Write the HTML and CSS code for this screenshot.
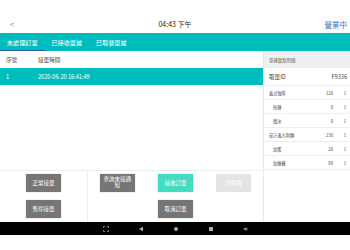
FILE: index.html
```html
<!DOCTYPE html>
<html lang="zh-Hant">
<head>
<meta charset="utf-8">
<link rel="stylesheet" href="styles.css">
</head>
<body>
<div class="screen">
  <div class="statusbar"></div>
  <header class="topbar">
    <span class="back">&lt;</span>
    <span class="clock">04:43 下午</span>
    <span class="status">營業中</span>
  </header>
  <nav class="tabs">
    <div class="tab active">未處理訂單</div>
    <div class="tab">已接收單據</div>
    <div class="tab">已取餐單據</div>
  </nav>
  <main class="main">
    <section class="left">
      <div class="table">
        <div class="trow thead"><span class="c1">序號</span><span class="c2">接單時間</span></div>
        <div class="trow selected"><span class="c1">1</span><span class="c2">2020-06-20 16:41:49</span></div>
      </div>
      <div class="actions">
        <div class="group-left">
          <button class="btn grey">正常接單</button>
          <button class="btn grey">暫停接單</button>
        </div>
        <div class="group-mid">
          <button class="btn grey two">查詢未接通知</button>
          <button class="btn mint">接收訂單</button>
          <button class="btn light">已取餐</button>
          <span></span>
          <button class="btn grey">取消訂單</button>
          <span></span>
        </div>
      </div>
    </section>
    <aside class="detail">
      <div class="d-head">單據餐點明細</div>
      <div class="d-id"><span>取單ID</span><span>F9336</span></div>
      <div class="item"><span class="name">義式咖啡</span><span class="price">120</span><span class="qty">1</span></div>
      <div class="item sub"><span class="name">無糖</span><span class="price">0</span><span class="qty">1</span></div>
      <div class="item sub"><span class="name">微冰</span><span class="price">0</span><span class="qty">1</span></div>
      <div class="item"><span class="name">茄汁義大利麵</span><span class="price">230</span><span class="qty">1</span></div>
      <div class="item sub"><span class="name">加蛋</span><span class="price">20</span><span class="qty">1</span></div>
      <div class="item sub"><span class="name">加爆雞</span><span class="price">80</span><span class="qty">1</span></div>
    </aside>
  </main>
  <footer class="navbar">
    <svg class="nav-ico" viewBox="0 0 6 6"><path d="M0.5 2V0.5H2M4 0.5H5.5V2M5.5 4V5.5H4M2 5.5H0.5V4" fill="none" stroke="#9a9a9a" stroke-width="0.8"/></svg>
    <svg class="nav-ico" viewBox="0 0 6 6"><path d="M1 3L5 0.8V5.2Z" fill="#b0b0b0"/></svg>
    <svg class="nav-ico" viewBox="0 0 6 6"><circle cx="3" cy="3" r="1.9" fill="#b0b0b0"/></svg>
    <svg class="nav-ico" viewBox="0 0 6 6"><rect x="1" y="1" width="4" height="4" fill="#b0b0b0"/></svg>
    <svg class="nav-ico" viewBox="0 0 6 6"><path d="M0.8 2.2H2L3.6 1V5L2 3.8H0.8Z" fill="#9a9a9a"/><path d="M4.3 2.2Q4.9 3 4.3 3.8" fill="none" stroke="#9a9a9a" stroke-width="0.5"/></svg>
  </footer>
</div>
</body>
</html>
```
FILE: styles.css
```css
html, body {
  margin: 0;
  padding: 0;
  background: #ffffff;
}
body {
  font-family: "Noto Sans CJK TC", "Noto Sans", sans-serif;
  color: #333;
}
.screen {
  width: 350px;
  height: 250px;
  overflow: hidden;
  display: flex;
  flex-direction: column;
}
.statusbar {
  height: 16px;
  flex: none;
}
.topbar {
  height: 17px;
  flex: none;
  display: grid;
  grid-template-columns: 1fr auto 1fr;
  align-items: center;
}
.back {
  padding-left: 10px;
  font-size: 7px;
  color: #888;
  line-height: 1;
}
.clock {
  font-size: 7px;
  color: #222;
  line-height: 1;
}
.status {
  justify-self: end;
  height: 15px;
  display: flex;
  align-items: center;
  padding: 0 3px 0 2px;
  font-size: 7.5px;
  color: #3b74b8;
  background: #fbfcfe;
  box-shadow: 0 0 1px rgba(0,0,0,0.15);
}
.tabs {
  height: 18px;
  flex: none;
  background: #00bdbd;
  display: flex;
}
.tab {
  width: 44.5px;
  display: flex;
  align-items: center;
  justify-content: center;
  font-size: 6.2px;
  color: #ffffff;
  box-sizing: border-box;
}
.tab.active {
  border-bottom: 1px solid #2c5ea8;
  padding-top: 1px;
}
.main {
  height: 171px;
  flex: none;
  display: flex;
}
.left {
  width: 263px;
  display: flex;
  flex-direction: column;
}
.table {
  height: 119px;
}
.trow {
  height: 17px;
  display: flex;
  align-items: center;
  font-size: 5.6px;
}
.thead {
  color: #444;
}
.selected {
  background: #00bdbd;
  color: #ffffff;
}
.c1 {
  width: 38px;
  padding-left: 6px;
  box-sizing: border-box;
}
.actions {
  flex: 1;
  display: flex;
  border-top: 1px solid #eeeeee;
}
.group-left {
  width: 88px;
  border-right: 1px solid #eeeeee;
  display: flex;
  flex-direction: column;
  align-items: center;
  gap: 8px;
  padding-top: 3px;
  box-sizing: border-box;
}
.group-mid {
  flex: 1;
  display: grid;
  grid-template-columns: repeat(3, 1fr);
  grid-template-rows: 18px 18px;
  row-gap: 8px;
  justify-items: center;
  padding-top: 3px;
}
.btn {
  width: 35px;
  height: 18px;
  border: none;
  margin: 0;
  padding: 0 3px;
  font-family: inherit;
  font-size: 5.5px;
  line-height: 1.1;
  color: #ffffff;
  box-shadow: 0 0 1px rgba(0,0,0,0.3);
}
.btn.two {
  padding-top: 0;
  line-height: 1.05;
  display: block;
  text-align: center;
}
.grey {
  background: #767676;
}
.mint {
  background: #44dbc0;
}
.light {
  background: #e4e4e4;
  box-shadow: none;
}
.detail {
  flex: 1;
  border-left: 1px solid #e8e8e8;
  display: flex;
  flex-direction: column;
}
.d-head {
  height: 17px;
  background: #efefef;
  display: flex;
  align-items: center;
  padding-left: 5px;
  font-size: 4.4px;
  color: #666;
}
.d-id {
  height: 18px;
  display: flex;
  align-items: center;
  justify-content: space-between;
  padding: 0 3px 0 5px;
  font-size: 5.6px;
  color: #444;
  border-bottom: 1px solid #eeeeee;
  box-sizing: border-box;
}
.item {
  height: 14px;
  display: flex;
  align-items: center;
  padding-left: 5px;
  font-size: 4.2px;
  color: #444;
  border-bottom: 1px solid #eeeeee;
  box-sizing: border-box;
}
.item.sub {
  padding-left: 9px;
}
.name {
  flex: 1;
}
.price {
  width: 20px;
  text-align: right;
  margin-right: 7px;
}
.qty {
  width: 10px;
  text-align: center;
}
.navbar {
  height: 13px;
  flex: none;
  background: #000000;
  display: flex;
  align-items: center;
  justify-content: center;
  gap: 29px;
  padding-left: 1px;
}
.nav-ico {
  width: 6px;
  height: 6px;
}
```
